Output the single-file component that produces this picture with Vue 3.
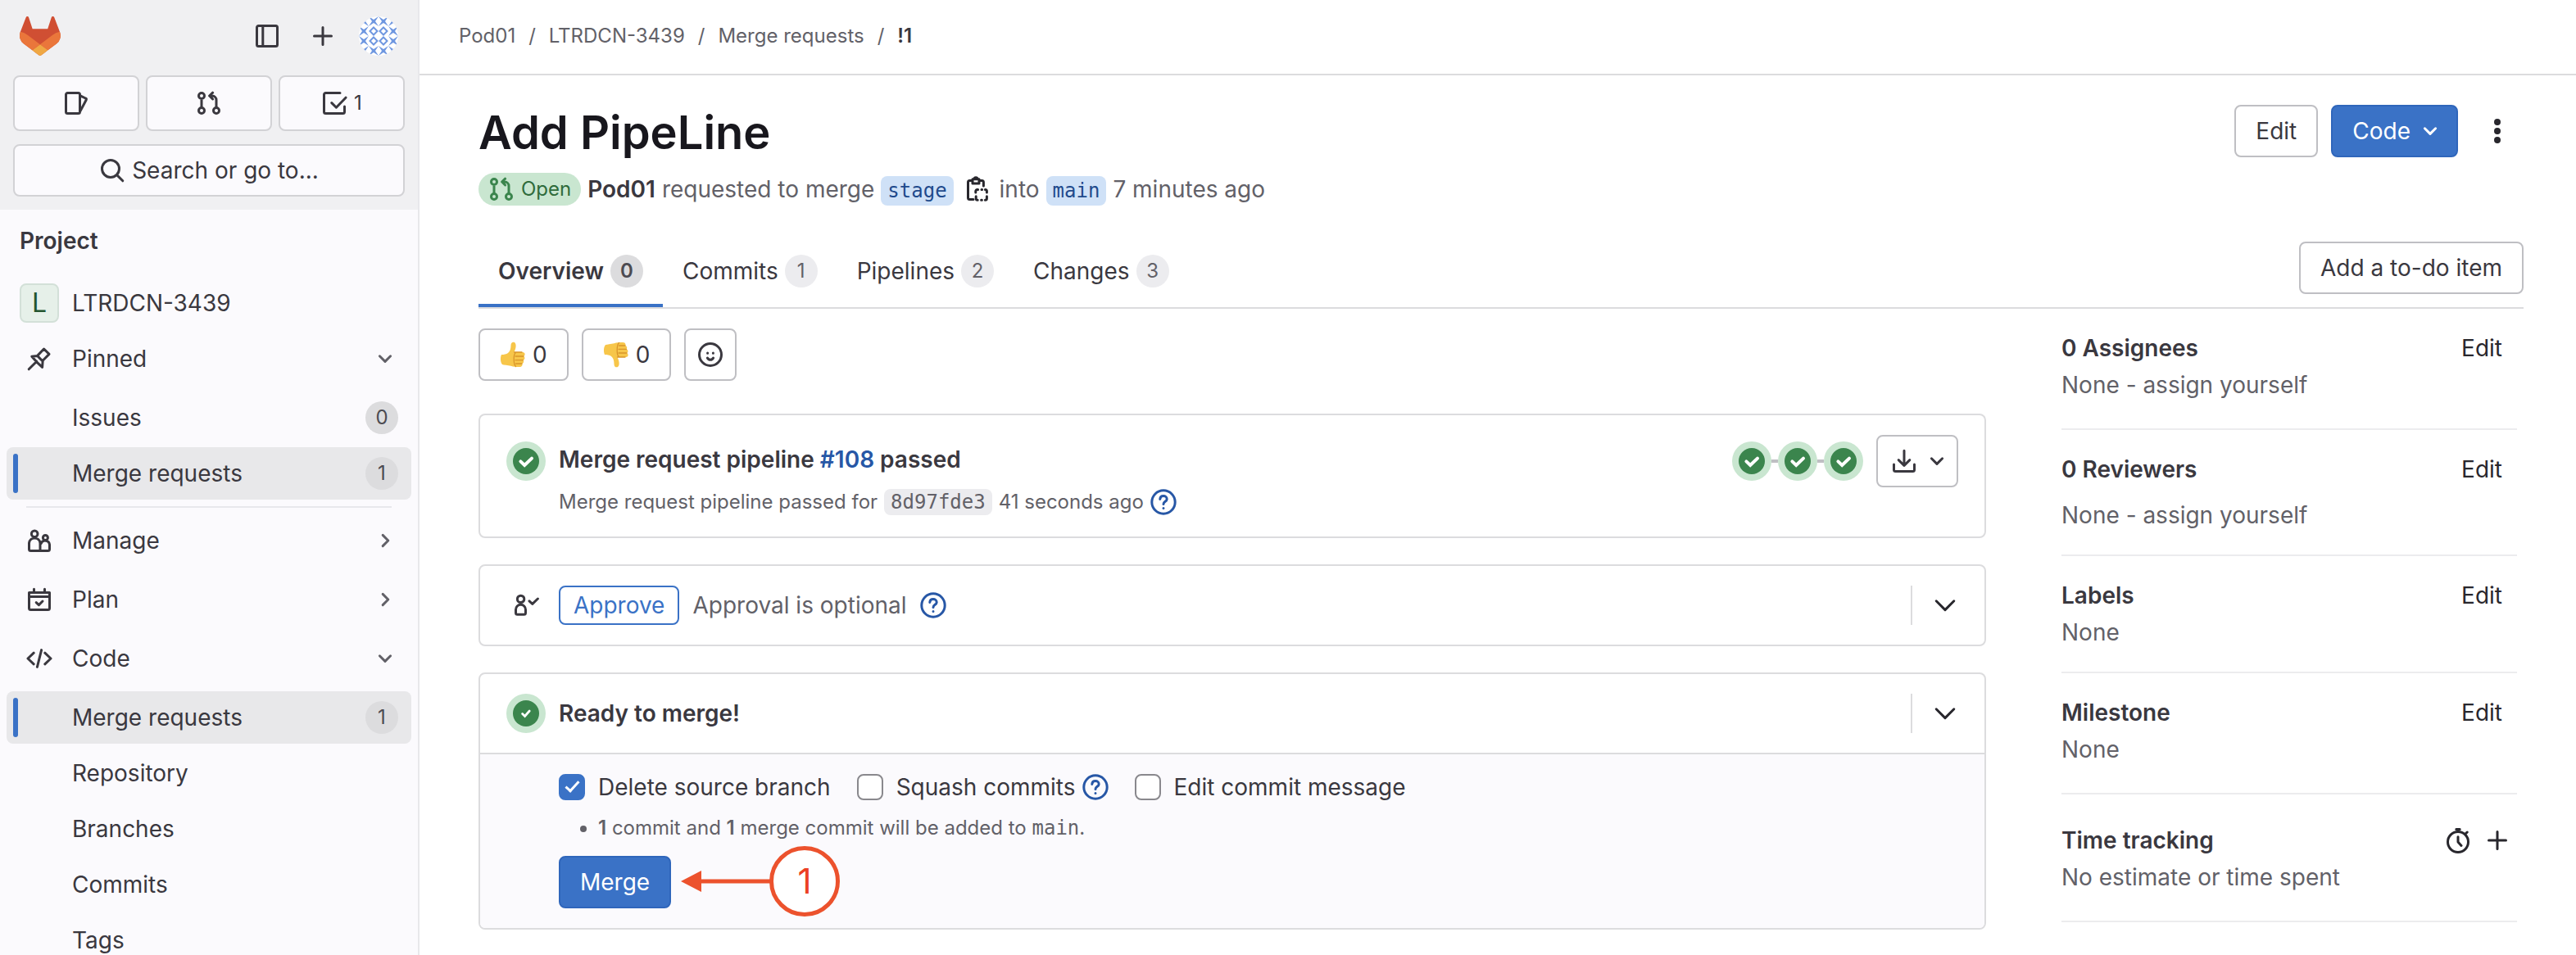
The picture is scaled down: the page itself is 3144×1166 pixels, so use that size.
<script setup>
import { ref, h } from "vue";

// 16x16 outline icons, drawn with a 1.5 stroke
const icons = {
  panel: "M2.75 1.75h10.5a1 1 0 0 1 1 1v10.5a1 1 0 0 1-1 1H2.75a1 1 0 0 1-1-1V2.75a1 1 0 0 1 1-1ZM5.4 2v12",
  plus: "M8 2.75v10.5M2.75 8h10.5",
  issues: "M2.75 1.75h6.5a1 1 0 0 1 1 1v10.5a1 1 0 0 1-1 1h-6.5a1 1 0 0 1-1-1V2.75a1 1 0 0 1 1-1ZM10.5 3.4l3.2 1.6q.7.3.4 1l-3.6 6.8",
  merge:
    "M5.25 3.5a1.75 1.75 0 1 1-3.5 0 1.75 1.75 0 0 1 3.5 0ZM5.25 12.5a1.75 1.75 0 1 1-3.5 0 1.75 1.75 0 0 1 3.5 0ZM14.25 12.5a1.75 1.75 0 1 1-3.5 0 1.75 1.75 0 0 1 3.5 0ZM3.5 5.5v5M12.5 10.5V6A2.5 2.5 0 0 0 10 3.5H8.4M10.3 1.6 8.3 3.5l2 2",
  todo: "M11.5 1.75H2.75a1 1 0 0 0-1 1v10.5a1 1 0 0 0 1 1h10.5a1 1 0 0 0 1-1V10M6.4 7.8l2.8 2.8 5.8-6",
  search: "M12.25 7a5.25 5.25 0 1 1-10.5 0 5.25 5.25 0 0 1 10.5 0ZM10.8 10.8l3.6 3.6",
  pin: "M1.6 14.4 6.4 9.6M6.2 9.8 3.4 6.6l3.4-.4 4-4.2 3.2 3.2-3.9 3.9-.3 4.1ZM6.8 6.2l3.2 3.3",
  users:
    "M7 3.9a1.9 1.9 0 1 1-3.8 0 1.9 1.9 0 0 1 3.8 0ZM13.2 6.2a1.5 1.5 0 1 1-3 0 1.5 1.5 0 0 1 3 0ZM1.75 13.25V9.5a3.4 3.4 0 0 1 6.75 0v4.75H2.75a1 1 0 0 1-1-1ZM9 9.9a2.7 2.7 0 0 1 5.25.6v2.75a1 1 0 0 1-1 1H8.5",
  calendar:
    "M1.75 3.75h12.5v9.5a1 1 0 0 1-1 1H2.75a1 1 0 0 1-1-1ZM1.75 6.25h12.5M4.75 1.6v2M11.25 1.6v2M6.1 9.8l1.6 1.5 2.3-2.3",
  code: "M4.6 4.6 1 8l3.6 3.4M11.4 4.6 15 8l-3.6 3.4M9.3 2.8 6.7 13.2",
  down: "M4.7 6.4 8 9.7l3.3-3.3",
  right: "M6.6 4.7 9.9 8l-3.3 3.3",
  bigDown: "M2.6 5.4 8 10.8l5.4-5.4",
  paste:
    "M5 2.75H3.75a1 1 0 0 0-1 1v9.5a1 1 0 0 0 1 1H6M10 2.75h1.2a1 1 0 0 1 1 1V6M5.5 1.9h4v2.6h-4ZM6.5 1.9a1 1 0 0 1 2 0M7.4 10V9.2a1 1 0 0 1 1-1h.4M11 8.2h.3M13.2 8.2a1 1 0 0 1 1 1v.8M14.2 12.4v1.2a1 1 0 0 1-1 1M11.2 14.6h-.4M8.6 14.6a1 1 0 0 1-1-1v-1.2",
  smile:
    "M14.75 8A6.75 6.75 0 1 1 1.25 8a6.75 6.75 0 0 1 13.5 0ZM6.3 7v.1M9.7 7v.1M6.2 10a2 2 0 0 0 3.6 0",
  help: "M15.1 8A7.1 7.1 0 1 1 .9 8a7.1 7.1 0 0 1 14.2 0ZM5.9 6.2C6 4.9 6.9 4.3 8 4.3s2.1.8 2.1 1.9c0 1.3-2.1 1.6-2.1 3M8 11.7v.1",
  download: "M8 1.6v9M4.6 7.3 8 10.7l3.4-3.4M1.75 10v3.25a1 1 0 0 0 1 1h10.5a1 1 0 0 0 1-1V10",
  approval:
    "M6.9 4.2a2.1 2.1 0 1 1-4.2 0 2.1 2.1 0 0 1 4.2 0ZM1.75 12.6v-2a3 3 0 0 1 6 0v2a1 1 0 0 1-1 1h-4a1 1 0 0 1-1-1ZM10 5.4l1.9 1.8L15.2 4",
  timer:
    "M14.25 9A6.25 6.25 0 1 1 1.75 9a6.25 6.25 0 0 1 12.5 0ZM8 5.9V9l2 2.2M6.9 1.2h2.2M8 1.2v1.5M12.4 4.2l1.2-1.2",
  dots: "M8 2.5v.01M8 8v.01M8 13.5v.01",
};

const Icon = (props) =>
  h("svg", { class: "icon", viewBox: "0 0 16 16", "aria-hidden": "true" }, [
    h("path", { d: icons[props.name] }),
  ]);
Icon.props = ["name"];

const Status = (props) =>
  h("span", { class: "status" }, [
    h("svg", { viewBox: "0 0 16 16", width: 32, height: 32, "aria-hidden": "true" }, [
      h("circle", { cx: 8, cy: 8, r: 8, fill: "#3b854d" }),
      h("path", {
        d: props.small ? "M5.8 8.2l1.5 1.5 2.8-3.2" : "M4.7 8.2l2.4 2.3 4.4-4.2",
        fill: "none",
        stroke: "#fff",
        "stroke-width": props.small ? 1.4 : 2,
        "stroke-linecap": "round",
      }),
    ]),
  ]);
Status.props = { small: Boolean };

const crumbs = ["Pod01", "LTRDCN-3439", "Merge requests"];

const pinned = [
  { name: "Issues", count: 0 },
  { name: "Merge requests", count: 1, active: true },
];
const codeItems = [
  { name: "Merge requests", count: 1, active: true },
  { name: "Repository" },
  { name: "Branches" },
  { name: "Commits" },
  { name: "Tags" },
];

const tabs = [
  { name: "Overview", count: 0 },
  { name: "Commits", count: 1 },
  { name: "Pipelines", count: 2 },
  { name: "Changes", count: 3 },
];
const currentTab = ref("Overview");

const fields = [
  { title: "0 Assignees", value: "None - assign yourself", style: "tall" },
  { title: "0 Reviewers", value: "None - assign yourself", style: "spaced" },
  { title: "Labels", value: "None" },
  { title: "Milestone", value: "None", style: "tall" },
];

const deleteBranch = ref(true);
const squash = ref(false);
const editMessage = ref(false);

// identicon cells, 12px each
const innerCells = [
  [12, 12],
  [24, 12],
  [12, 24],
  [24, 24],
];
const outerCells = [];
for (let y = 0; y < 4; y++) {
  for (let x = 0; x < 4; x++) {
    if (x === 0 || x === 3 || y === 0 || y === 3) outerCells.push([x * 12, y * 12]);
  }
}
</script>

<template>
  <div class="page">
    <aside class="sidebar">
      <div class="user-bar">
        <div class="brand-row">
          <a href="#" class="logo" aria-label="Homepage">
            <svg viewBox="0 0 25 24" width="50" height="48">
              <path fill="#d04f33" d="m24.507 9.5-.034-.09L21.082.562a.896.896 0 0 0-1.694.091l-2.29 7.01H7.825L5.535.653a.898.898 0 0 0-1.694-.09L.451 9.411.416 9.5a6.297 6.297 0 0 0 2.09 7.278l.012.01.03.022 5.16 3.867 2.56 1.935 1.554 1.176a1.051 1.051 0 0 0 1.268 0l1.555-1.176 2.56-1.935 5.197-3.89.014-.01A6.297 6.297 0 0 0 24.507 9.5Z" />
              <path fill="#ea763b" d="m24.507 9.5-.034-.09a11.44 11.44 0 0 0-4.56 2.051l-7.447 5.632 4.742 3.584 5.197-3.89.014-.01A6.297 6.297 0 0 0 24.507 9.5Z" />
              <path fill="#efa844" d="m7.707 20.677 2.56 1.935 1.555 1.176a1.051 1.051 0 0 0 1.268 0l1.555-1.176 2.56-1.935-4.743-3.584-4.755 3.584Z" />
              <path fill="#ea763b" d="M5.01 11.461a11.43 11.43 0 0 0-4.56-2.05L.416 9.5a6.297 6.297 0 0 0 2.09 7.278l.012.01.03.022 5.16 3.867 4.745-3.584-7.444-5.632Z" />
            </svg>
          </a>
          <button class="bare" aria-label="Hide sidebar"><Icon name="panel" /></button>
          <button class="bare" aria-label="Create new"><Icon name="plus" /></button>
          <button class="avatar" aria-label="User menu">
            <svg viewBox="0 0 48 48" width="48" height="48">
              <rect width="48" height="48" fill="#fff" />
              <g fill="none" stroke="#6f97e0" stroke-width="2">
                <path v-for="(c, i) in innerCells" :key="i" :d="`M${c[0] + 6} ${c[1] + 1.5}l4.5 4.5-4.5 4.5-4.5-4.5z`" />
              </g>
              <g fill="#6f97e0">
                <path v-for="(c, i) in outerCells" :key="i" :d="`M${c[0]} ${c[1]}l6 4 6-4-4 6 4 6-6-4-6 4 4-6z`" />
              </g>
            </svg>
          </button>
        </div>
        <div class="counters">
          <button class="counter" aria-label="Issues"><Icon name="issues" /></button>
          <button class="counter" aria-label="Merge requests"><Icon name="merge" /></button>
          <button class="counter" aria-label="To-do items"><Icon name="todo" />1</button>
        </div>
        <button class="search"><Icon name="search" />Search or go to...</button>
      </div>

      <nav class="nav">
        <h2 class="nav-title">Project</h2>
        <a href="#" class="nav-item project"><span class="project-avatar">L</span>LTRDCN-3439</a>
        <button class="nav-item"><Icon name="pin" />Pinned<Icon name="down" class="chevron" /></button>
        <ul class="sub">
          <li v-for="item in pinned" :key="item.name">
            <a href="#" class="nav-item" :class="{ active: item.active }">
              {{ item.name }}<span class="count">{{ item.count }}</span>
            </a>
          </li>
        </ul>
        <hr />
        <button class="nav-item"><Icon name="users" />Manage<Icon name="right" class="chevron" /></button>
        <button class="nav-item spaced-top"><Icon name="calendar" />Plan<Icon name="right" class="chevron" /></button>
        <button class="nav-item spaced-top"><Icon name="code" />Code<Icon name="down" class="chevron" /></button>
        <ul class="sub">
          <li v-for="item in codeItems" :key="item.name">
            <a href="#" class="nav-item" :class="{ active: item.active }">
              {{ item.name }}<span v-if="item.count" class="count">{{ item.count }}</span>
            </a>
          </li>
        </ul>
      </nav>
    </aside>

    <div class="content">
      <nav class="top-bar" aria-label="Breadcrumb">
        <template v-for="crumb in crumbs" :key="crumb">
          <a href="#">{{ crumb }}</a>
          <span>/</span>
        </template>
        <a href="#" class="current">!1</a>
      </nav>

      <main>
        <header class="title-row">
          <h1>Add PipeLine</h1>
          <button class="btn">Edit</button>
          <button class="btn primary">Code<Icon name="down" /></button>
          <button class="btn kebab" aria-label="Merge request actions"><Icon name="dots" /></button>
        </header>

        <div class="meta">
          <span class="open-badge"><Icon name="merge" />Open</span>
          <a href="#" class="author">Pod01</a>
          <span>requested to merge</span>
          <a href="#" class="branch">stage</a>
          <button class="copy" aria-label="Copy branch name"><Icon name="paste" /></button>
          <span>into</span>
          <a href="#" class="branch">main</a>
          <span>7 minutes ago</span>
        </div>

        <div class="tab-row">
          <button
            v-for="tab in tabs"
            :key="tab.name"
            class="tab"
            :class="{ selected: tab.name === currentTab }"
            @click="currentTab = tab.name"
          >
            {{ tab.name }}<span class="count">{{ tab.count }}</span>
          </button>
          <button class="btn todo">Add a to-do item</button>
        </div>

        <div class="columns">
          <div class="discussion">
            <div class="awards">
              <button class="btn award" aria-label="Thumbs up">
                <svg viewBox="0 0 32 32" width="32" height="32">
                  <path fill="#f7c64a" d="M2 16c3 0 6-.5 8-2 2.5-2 3.5-5 3.5-9.5C13.5 1 16 0 18 1c2 1.5 2.5 6-.5 12H28c3 0 3.5 4 1 5 2 1 2 4-.5 4.7 1.3 1.3.8 3.6-1.2 4.3.7 2-.3 4-3.3 4-4 0-7.5 0-10.5-1.2C9.5 29 5 28.5 3 28c-2.5-3-2.5-9-1-12Z" />
                  <path fill="none" stroke="#d9952a" stroke-width="1.3" stroke-linecap="round" d="M19 18h10M19 22.6h9.5M19.5 27h7.5M19 14c-2.5 2-2.5 14 .5 16.5M17.5 13H27" />
                </svg>0
              </button>
              <button class="btn award" aria-label="Thumbs down">
                <svg viewBox="0 0 32 32" width="32" height="32">
                  <path fill="#f7c64a" d="M2 16c3 0 6 .5 8 2 2.5 2 3.5 5 3.5 9.5C13.5 31 16 32 18 31c2-1.5 2.5-6-.5-12H28c3 0 3.5-4 1-5 2-1 2-4-.5-4.7 1.3-1.3.8-3.6-1.2-4.3C28 3 27 1 24 1c-4 0-7.5 0-10.5 1.2C9.5 3 5 3.5 3 4 .5 7 .5 13 2 16Z" />
                  <path fill="none" stroke="#d9952a" stroke-width="1.3" stroke-linecap="round" d="M19 14h10M19 9.4h9.5M19.5 5h7.5M19 18c-2.5-2-2.5-14 .5-16.5M17.5 19H27" />
                </svg>0
              </button>
              <button class="btn emoji" aria-label="Add reaction"><Icon name="smile" /></button>
            </div>

            <section class="card pipeline">
              <Status />
              <div class="pipeline-text">
                <h3>Merge request pipeline <a href="#">#108</a> passed</h3>
                <p>
                  <span>Merge request pipeline passed for</span>
                  <a href="#" class="sha">8d97fde3</a>
                  <span>41 seconds ago</span>
                  <button class="help" aria-label="Help"><Icon name="help" /></button>
                </p>
              </div>
              <div class="stages">
                <Status /><i></i><Status /><i></i><Status />
              </div>
              <button class="btn artifacts" aria-label="Download artifacts">
                <Icon name="download" /><Icon name="down" />
              </button>
            </section>

            <section class="card">
              <div class="card-head">
                <span class="icon-slot"><Icon name="approval" /></span>
                <button class="approve">Approve</button>
                <span class="muted">Approval is optional</span>
                <button class="help" aria-label="Approval help"><Icon name="help" /></button>
                <div class="toggle">
                  <button class="bare" aria-label="Expand approvals"><Icon name="bigDown" /></button>
                </div>
              </div>
            </section>

            <section class="card">
              <div class="card-head">
                <Status small />
                <h3>Ready to merge!</h3>
                <div class="toggle">
                  <button class="bare" aria-label="Expand merge details"><Icon name="bigDown" /></button>
                </div>
              </div>
              <div class="card-body">
                <div class="options">
                  <label><input v-model="deleteBranch" type="checkbox" />Delete source branch</label>
                  <div class="option">
                    <label><input v-model="squash" type="checkbox" />Squash commits</label>
                    <button class="help" aria-label="Squash help"><Icon name="help" /></button>
                  </div>
                  <label><input v-model="editMessage" type="checkbox" />Edit commit message</label>
                </div>
                <ul class="summary">
                  <li><b>1</b> commit and <b>1</b> merge commit will be added to <code>main</code>.</li>
                </ul>
                <div class="merge-row">
                  <button class="btn primary">Merge</button>
                  <div class="callout">
                    <svg viewBox="0 0 110 26" width="110" height="26" aria-hidden="true">
                      <path fill="#ec522d" d="M0 13 25 0v10.5h85v5H25V26z" />
                    </svg>
                    <span>1</span>
                  </div>
                </div>
              </div>
            </section>
          </div>

          <aside class="details">
            <section v-for="field in fields" :key="field.title" :class="field.style">
              <header>
                <h3>{{ field.title }}</h3>
                <button class="edit">Edit</button>
              </header>
              <p>{{ field.value }}</p>
            </section>
            <section class="tall time">
              <header>
                <h3>Time tracking</h3>
                <button class="bare" aria-label="Set estimate"><Icon name="timer" /></button>
                <button class="bare" aria-label="Add time entry"><Icon name="plus" /></button>
              </header>
              <p>No estimate or time spent</p>
            </section>
          </aside>
        </div>
      </main>
    </div>
  </div>
</template>

<style>
body {
  background: #fff;
}
.status {
  display: flex;
  align-items: center;
  justify-content: center;
  flex: none;
  width: 48px;
  height: 48px;
  border-radius: 50%;
  background: #c9e6d0;
}
</style>

<style scoped>
.page {
  display: flex;
  height: 100vh;
  overflow: hidden;
  color: #3a383f;
  font-family: Inter, "Noto Sans", sans-serif;
  font-size: 28px;
  line-height: 40px;
}
h1,
h2,
h3,
p,
ul {
  margin: 0;
  padding: 0;
}
h2,
h3 {
  font-size: 28px;
  font-weight: 600;
}
a {
  color: inherit;
  text-decoration: none;
}
button {
  padding: 0;
  border: 0;
  background: none;
  color: inherit;
  font: inherit;
  cursor: pointer;
}
.icon {
  flex: none;
  width: 32px;
  height: 32px;
  fill: none;
  stroke: currentColor;
  stroke-width: 1.5;
  stroke-linecap: round;
  stroke-linejoin: round;
}
.bare {
  display: flex;
  align-items: center;
  justify-content: center;
  width: 48px;
  height: 48px;
  color: #28272d;
}

/* sidebar */
.sidebar {
  box-sizing: border-box;
  flex: none;
  width: 512px;
  overflow: hidden;
  border-right: 2px solid #e8e8eb;
  background: #fbfafd;
}
.user-bar {
  padding: 16px;
  background: #f0f0f2;
}
.brand-row {
  display: flex;
  align-items: center;
  gap: 20px;
  height: 56px;
  padding: 0 8px;
  margin-bottom: 20px;
}
.brand-row .bare {
  color: #3a383f;
}
.logo {
  display: flex;
  margin-right: auto;
}
.avatar {
  width: 48px;
  height: 48px;
  overflow: hidden;
  border-radius: 50%;
}
.avatar svg {
  display: block;
}
.counters {
  display: flex;
  gap: 8px;
  margin-bottom: 16px;
}
.counter,
.search {
  box-sizing: border-box;
  display: flex;
  flex: 1;
  align-items: center;
  justify-content: center;
  gap: 8px;
  height: 68px;
  border: 2px solid #d2d2d5;
  border-radius: 8px;
  background: #fbfafd;
  font-size: 24px;
}
.search {
  width: 100%;
  height: 64px;
  font-size: 28px;
}
.nav {
  padding: 18px 8px 0;
}
.nav-title {
  padding: 0 16px;
  margin-bottom: 24px;
}
.nav-item {
  box-sizing: border-box;
  position: relative;
  display: flex;
  align-items: center;
  gap: 24px;
  width: 100%;
  height: 64px;
  padding: 0 16px 0 24px;
  border-radius: 8px;
}
.project {
  gap: 16px;
  padding-left: 16px;
  margin-bottom: 4px;
}
.project-avatar {
  box-sizing: border-box;
  width: 48px;
  height: 48px;
  border: 2px solid #d3e0d8;
  border-radius: 8px;
  background: #e6f0e9;
  color: #24552f;
  font-size: 32px;
  line-height: 44px;
  text-align: center;
}
.chevron {
  margin-left: auto;
  color: #626168;
}
.sub {
  display: flex;
  flex-direction: column;
  gap: 4px;
  margin-top: 8px;
  list-style: none;
}
.sub .nav-item {
  padding-left: 80px;
}
.active {
  background: #e8e8ea;
}
.active::before {
  content: "";
  position: absolute;
  top: 8px;
  bottom: 8px;
  left: 8px;
  width: 6px;
  border-radius: 3px;
  background: #3a72c6;
}
.count {
  width: 40px;
  height: 40px;
  border-radius: 50%;
  background: #dcdcde;
  color: #4c4b51;
  font-size: 24px;
  text-align: center;
}
.nav-item .count {
  margin-left: auto;
}
hr {
  height: 2px;
  margin: 8px 24px;
  border: 0;
  background: #e8e8ec;
}
.spaced-top {
  margin-top: 8px;
}

/* main area */
.content {
  flex: 1;
  min-width: 0;
}
.top-bar {
  box-sizing: border-box;
  display: flex;
  align-items: center;
  gap: 16px;
  height: 92px;
  padding: 0 48px 2px;
  border-bottom: 2px solid #dcdcde;
  color: #626168;
  font-size: 24px;
}
.current {
  color: #3a383f;
  font-weight: 600;
}
main {
  padding: 36px 64px 0 72px;
}
.title-row {
  display: flex;
  gap: 16px;
}
h1 {
  flex: 1;
  color: #18171d;
  font-size: 56px;
  font-weight: 600;
  line-height: 68px;
}
.btn {
  box-sizing: border-box;
  display: flex;
  flex: none;
  align-items: center;
  justify-content: center;
  gap: 8px;
  height: 64px;
  padding: 0 24px;
  border: 2px solid #bfbfc3;
  border-radius: 8px;
  background: #fff;
}
.primary {
  border-color: #2f66bb;
  background: #3a72c6;
  color: #fff;
}
.primary .icon {
  margin-right: -8px;
}
.kebab {
  width: 64px;
  padding: 0;
  border-color: transparent;
  color: #28272d;
}
.kebab .icon {
  stroke-width: 4;
}
.meta {
  display: flex;
  align-items: center;
  gap: 8px;
  height: 40px;
  margin-top: 15px;
  color: #626168;
}
.open-badge {
  display: flex;
  align-items: center;
  gap: 8px;
  padding: 0 12px;
  border-radius: 20px;
  background: #c9e6d0;
  color: #2f6b3b;
  font-size: 24px;
}
.open-badge .icon {
  color: #3b854d;
}
.author {
  color: #3a383f;
  font-weight: 600;
}
.branch,
.sha,
code {
  font-family: "DejaVu Sans Mono", monospace;
  font-size: 24px;
}
.branch {
  align-self: flex-end;
  padding: 0 8px;
  border-radius: 8px;
  background: #cfe1f7;
  color: #1f4a8c;
  line-height: 36px;
}
.copy {
  display: flex;
  justify-content: center;
  width: 40px;
  color: #28272d;
}
.tab-row {
  display: flex;
  align-items: flex-start;
  margin-top: 36px;
  border-bottom: 2px solid #dcdcde;
}
.tab {
  display: flex;
  align-items: center;
  gap: 8px;
  height: 88px;
  padding: 0 24px;
}
.tab .count {
  background: #ececef;
  color: #626168;
}
.selected {
  box-shadow: inset 0 -4px #3a72c6;
  font-weight: 600;
}
.tab.selected .count {
  background: #dcdcde;
  color: #4c4b51;
}
.todo {
  margin: 8px 0 0 auto;
}
.columns {
  display: flex;
  align-items: flex-start;
  gap: 92px;
}
.discussion {
  display: flex;
  flex: 1;
  flex-direction: column;
  gap: 32px;
  padding-top: 24px;
}
.awards {
  display: flex;
  gap: 16px;
  margin-bottom: 8px;
}
.emoji {
  width: 64px;
  padding: 0;
}

/* widget cards */
.card {
  overflow: hidden;
  border: 2px solid #dcdcde;
  border-radius: 8px;
}
.pipeline {
  display: flex;
  align-items: flex-start;
  gap: 16px;
  padding: 24px 32px 22px;
}
.pipeline > .status,
.stages {
  margin-top: 8px;
}
.pipeline-text {
  flex: 1;
  padding-top: 8px;
}
.pipeline-text h3 {
  margin-bottom: 10px;
  line-height: 44px;
}
.pipeline-text h3 a {
  color: #2757a6;
}
.pipeline-text p {
  display: flex;
  align-items: center;
  gap: 8px;
  color: #626168;
  font-size: 24px;
}
.sha {
  padding: 0 8px;
  border-radius: 8px;
  background: #ececef;
  line-height: 32px;
}
.help {
  display: flex;
  color: #2757a6;
}
.stages {
  display: flex;
  align-items: center;
}
.stages i {
  width: 8px;
  height: 4px;
  background: #bfbfc3;
}
.artifacts {
  padding: 0 8px 0 16px;
}
.card-head {
  display: flex;
  align-items: center;
  gap: 16px;
  padding: 24px 24px 24px 32px;
}
.icon-slot {
  display: flex;
  justify-content: center;
  width: 48px;
}
.approve {
  box-sizing: border-box;
  height: 48px;
  padding: 0 16px;
  border: 2px solid #3a72c6;
  border-radius: 8px;
  color: #3a72c6;
}
.muted {
  color: #626168;
}
.toggle {
  padding-left: 16px;
  margin-left: auto;
  border-left: 2px solid #dcdcde;
}
.card-body {
  padding: 24px 32px 24px 96px;
  border-top: 2px solid #dcdcde;
  background: #fbfafd;
}
.options {
  display: flex;
  gap: 32px;
  line-height: 32px;
}
.option {
  display: flex;
  gap: 8px;
}
label {
  display: flex;
  gap: 16px;
}
input {
  box-sizing: border-box;
  width: 32px;
  height: 32px;
  margin: 0;
  border: 2px solid #89888d;
  border-radius: 8px;
  background: #fff;
  appearance: none;
}
input:checked {
  border-color: #3a72c6;
  background: #3a72c6;
}
input:checked::after {
  content: "";
  display: block;
  width: 6px;
  height: 14px;
  margin: 3px auto;
  border: solid #fff;
  border-width: 0 3px 3px 0;
  transform: rotate(42deg);
}
.summary {
  padding-left: 48px;
  margin: 16px 0;
  color: #626168;
  font-size: 24px;
  line-height: 36px;
}
.summary b {
  font-weight: 600;
}
.merge-row {
  position: relative;
  display: flex;
}
.callout {
  position: absolute;
  top: -12px;
  left: 149px;
  display: flex;
  align-items: center;
}
.callout span {
  box-sizing: border-box;
  width: 86px;
  height: 86px;
  margin-left: -2px;
  border: 5px solid #ec522d;
  border-radius: 50%;
  background: #fff;
  color: #ec3f23;
  font-size: 42px;
  line-height: 76px;
  text-align: center;
}

/* right column */
.details {
  flex: none;
  width: 556px;
  margin-right: 8px;
}
.details section {
  padding: 28px 0;
  border-bottom: 2px solid #ececee;
}
.details header {
  display: flex;
  align-items: center;
  height: 40px;
  margin-bottom: 5px;
}
.details h3 {
  flex: 1;
}
.details p {
  color: #626168;
}
.edit {
  padding: 0 18px;
  color: #28272d;
}
.details .tall {
  padding-bottom: 33px;
}
.details .spaced header {
  margin-bottom: 16px;
}
.details .time {
  padding-top: 36px;
}
</style>
